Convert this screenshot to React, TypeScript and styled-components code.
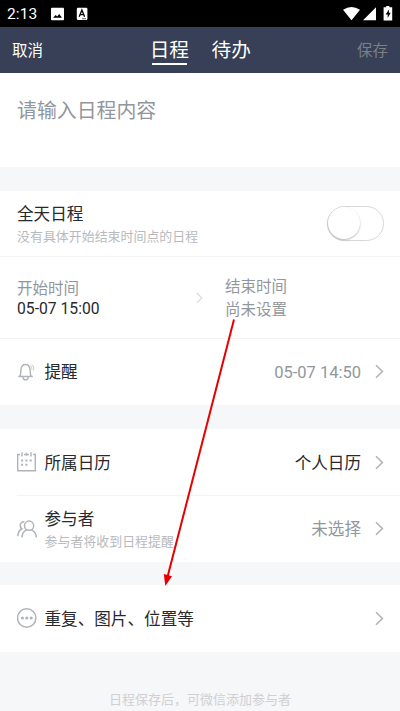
import React from "react";
import styled, { createGlobalStyle } from "styled-components";

const GlobalStyle = createGlobalStyle`
  * { box-sizing: border-box; }
  body { margin: 0; background: #f6f7f9; overflow: hidden; }
`;

const Screen = styled.main`
  position: relative;
  display: flex;
  flex-direction: column;
  width: 400px;
  height: 711px;
  overflow: hidden;
  background: #f6f7f9;
  color: #28292c;
  font-family: Roboto, "Noto Sans CJK SC", sans-serif;
`;

const StatusBar = styled.header`
  display: flex;
  align-items: center;
  height: 27px;
  padding: 0 6px 0 7px;
  background: #000;
  color: #fff;
`;

const Clock = styled.span`
  width: 44px;
  padding-top: 1px;
  font-size: 15.5px;
  line-height: 26px;
  letter-spacing: 0.1px;
`;

const StatusIcons = styled.svg<{ $end?: boolean }>`
  display: block;
  margin-left: ${(p) => (p.$end ? "auto" : "0")};
`;

const NavBar = styled.nav`
  display: grid;
  grid-template-columns: 1fr auto 1fr;
  height: 46px;
  padding: 0 12px;
  background: #374056;
  color: #fff;
`;

const NavAction = styled.button<{ $muted?: boolean }>`
  justify-self: ${(p) => (p.$muted ? "end" : "start")};
  border: 0;
  padding: 2px 0 0;
  background: none;
  color: ${(p) => (p.$muted ? "#7c7f87" : "#fff")};
  font: inherit;
  font-size: 15.5px;
  line-height: 44px;
`;

const Tabs = styled.div`
  display: flex;
  gap: 22.5px;
  padding: 11px 0 0 0.5px;
`;

const Tab = styled.span<{ $active?: boolean }>`
  display: flex;
  flex-direction: column;
  align-items: center;
  font-size: 19.7px;
  line-height: 25px;

  &::after {
    content: "";
    width: 35px;
    height: 2px;
    border-radius: 0.5px;
    background: ${(p) => (p.$active ? "#fff" : "transparent")};
  }
`;

const Composer = styled.section`
  height: 94px;
  padding: 24px 17px 0;
  background: #fff;
  color: #92979d;
  font-size: 19.9px;
  line-height: 30px;
`;

const Group = styled.section<{ $gap?: number }>`
  margin-top: ${(p) => p.$gap ?? 24}px;
  background: #fff;
`;

const Row = styled.div<{ $height: number; $divider?: "full" | "inset" }>`
  display: flex;
  align-items: center;
  height: ${(p) => p.$height}px;
  padding: 0 16px 0 17px;
  background: linear-gradient(#f4f4f5, #f4f4f5) no-repeat
    ${(p) => (p.$divider === "inset" ? "17px" : "0")} 100% / 100%
    ${(p) => (p.$divider ? "1px" : "0")};
`;

const IconSlot = styled.span`
  display: flex;
  width: 27.5px;
  padding-bottom: 1px;
`;

const Labels = styled.div<{ $single?: boolean }>`
  display: flex;
  flex-direction: column;
  flex: 1;
  padding-top: ${(p) => (p.$single ? "2px" : "1px")};
`;

const Title = styled.span`
  font-size: 16.6px;
  line-height: 24px;
`;

const Hint = styled.span`
  font-size: 12.95px;
  line-height: 20px;
  color: #b9babd;
`;

const Value = styled.span<{ $muted?: boolean; $numeric?: boolean }>`
  margin-right: 14px;
  padding-top: ${(p) => (p.$numeric ? "1px" : "2px")};
  font-size: ${(p) => (p.$numeric ? "16.5px" : "16.6px")};
  line-height: 24px;
  color: ${(p) => (p.$muted ? "#92979d" : "#28292c")};
`;

const TimeRow = styled(Row)`
  display: grid;
  grid-template-columns: 179px 29px 1fr;
`;

const TimeBlock = styled.div<{ $end?: boolean }>`
  display: flex;
  flex-direction: column;
  padding-top: ${(p) => (p.$end ? "1px" : "2px")};
`;

const TimeText = styled.span<{ $dark?: boolean; $height: number }>`
  font-size: ${(p) => (p.$dark ? "15.7px" : "15.5px")};
  line-height: ${(p) => p.$height}px;
  color: ${(p) => (p.$dark ? "#28292c" : "#92979d")};
`;

const Toggle = styled.span`
  width: 57px;
  height: 35px;
  margin: 0 0.5px 1px 0;
  border: 1px solid #d8d8d9;
  border-radius: 18px;
  background: #fff;

  &::after {
    content: "";
    display: block;
    width: 32px;
    height: 32px;
    border-radius: 50%;
    background: #fff;
    box-shadow: 0 1px 2px rgba(0, 0, 0, 0.28);
  }
`;

const FootNote = styled.footer`
  margin-top: 38px;
  text-align: center;
  font-size: 13px;
  line-height: 20px;
  color: #cfd0d3;
`;

const Pointer = styled.svg`
  position: absolute;
  left: 155px;
  top: 310px;
  pointer-events: none;
`;

const ChevronShape = styled.svg`
  display: block;
  margin-bottom: 1px;
`;

const Chevron = ({ color = "#b0b4b9", size = 1 }: { color?: string; size?: number }) => (
  <ChevronShape width={9 * size} height={15 * size} viewBox="0 0 9 15" fill="none" stroke={color} strokeWidth="1.6">
    <path d="M1 1.2 7.4 7.5 1 13.8" />
  </ChevronShape>
);

const BellIcon = () => (
  <svg width="20" height="20" viewBox="0 0 20 20" fill="none" stroke="#b0b3b7" strokeWidth="1.4">
    <path d="M1.200 14.500h14.600M2.900 14.300c1-1.700.7-3.400 1-6.600C4.300 4.500 6 2.500 8.500 2.500S12.700 4.500 13.100 7.700c.3 3.200 0 4.900 1 6.600M5.900 15.300c.3 1.700 1.300 2.500 2.700 2.500s2.400-.8 2.700-2.500" />
    <path d="M13.200 3.400c1.300 1.300 1.800 2.700 1.700 4.300M14.700 2.500c1.700 1.500 2.300 3.500 1.900 5.800" strokeWidth="1" stroke="#c4c6c9" />
  </svg>
);

const CalendarIcon = () => (
  <svg width="20" height="20" viewBox="0 0 20 20" fill="none" stroke="#b0b3b7" strokeWidth="1.400">
    <path d="M3 2.500H.7v16.300h17.600V2.500H16M7 2.500h4.900M5 .2v4.200M9.500.8v3M14 .2v4.200" />
    <path d="M4.100 8.500h2M8.400 8.500h2M12.700 8.500h2M4.100 12.800h2M8.400 12.800h2" strokeWidth="2" />
  </svg>
);

const PeopleIcon = () => (
  <svg width="20" height="18" viewBox="0 0 20 18" fill="none" stroke="#b0b4b9" strokeWidth="1.500">
    <circle cx="12.100" cy="5.700" r="4.600" />
    <path d="M5 17.400c.2-3.700 1.700-6.300 4.700-7.500M14.700 9.900c2.700 1.300 4.400 3.900 4.700 7.500M7.400 1.700C4.500 1.600 3.200 3.400 3.200 5.400c0 1.500.7 2.600 1.800 3.400C2.500 10 1 12.500.8 16.200" />
  </svg>
);

const MoreIcon = () => (
  <svg width="20" height="20" viewBox="0 0 20 20" fill="none" stroke="#b0b4b9" strokeWidth="1.500">
    <circle cx="9.700" cy="10" r="9.200" />
    <g fill="#b0b4b9" stroke="none">
      <circle cx="5.400" cy="10" r="1.600" />
      <circle cx="9.800" cy="10" r="1.600" />
      <circle cx="14.200" cy="10" r="1.600" />
    </g>
  </svg>
);

export default function App() {
  return (
    <Screen>
      <GlobalStyle />
      <StatusBar>
        <Clock>2:13</Clock>
        <StatusIcons width="37" height="14" viewBox="0 0 37 14" fill="#fff">
          <path fillRule="evenodd" d="M1.300.7h10.400c.8 0 1.300.5 1.300 1.300v9.900c0 .8-.5 1.300-1.300 1.300H1.300C.5 13.200 0 12.700 0 11.900V2C0 1.200.5.700 1.300.700ZM2 10.800h9L8.200 7 6.100 9.600 4.700 8 2 10.800Z" />
          <rect x="25.800" y=".8" width="10.600" height="12.200" rx="1.200" />
          <path d="m28.200 9.800 2.700-6.800 2.700 6.800M29.200 7.600h3.500M31.500 11.600h1m1 0h1" stroke="#000" strokeWidth="1.300" fill="none" />
        </StatusIcons>
        <StatusIcons $end width="51" height="16" viewBox="0 0 51 16" fill="#fff">
          <path d="M0 3.800Q8.500-1.800 17 3.800L8.500 14.200ZM20 14.200 33 1.200V14.200Z" />
          <path d="M43.200 1.200V0h3.200v1.200h2.800V14.600h-8.600V1.200Z" />
          <path d="M46.200 3.300 42.600 8.600h2.100v3.500L47.700 6.800h-1.900Z" fill="#000" />
        </StatusIcons>
      </StatusBar>
      <NavBar>
        <NavAction>取消</NavAction>
        <Tabs>
          <Tab $active>日程</Tab>
          <Tab>待办</Tab>
        </Tabs>
        <NavAction $muted>保存</NavAction>
      </NavBar>
      <Composer>请输入日程内容</Composer>
      <Group>
        <Row $height={66} $divider="full">
          <Labels>
            <Title>全天日程</Title>
            <Hint>没有具体开始结束时间点的日程</Hint>
          </Labels>
          <Toggle />
        </Row>
        <TimeRow $height={82} $divider="full">
          <TimeBlock>
            <TimeText $height={20}>开始时间</TimeText>
            <TimeText $height={20} $dark>05-07 15:00</TimeText>
          </TimeBlock>
          <Chevron color="#dcdee1" size={0.8} />
          <TimeBlock $end>
            <TimeText $height={23}>结束时间</TimeText>
            <TimeText $height={23}>尚未设置</TimeText>
          </TimeBlock>
        </TimeRow>
        <Row $height={66}>
          <IconSlot><BellIcon /></IconSlot>
          <Labels $single><Title>提醒</Title></Labels>
          <Value $muted $numeric>05-07 14:50</Value>
          <Chevron />
        </Row>
      </Group>
      <Group>
        <Row $height={67} $divider="inset">
          <IconSlot><CalendarIcon /></IconSlot>
          <Labels $single><Title>所属日历</Title></Labels>
          <Value>个人日历</Value>
          <Chevron />
        </Row>
        <Row $height={66}>
          <IconSlot><PeopleIcon /></IconSlot>
          <Labels>
            <Title>参与者</Title>
            <Hint>参与者将收到日程提醒</Hint>
          </Labels>
          <Value $muted>未选择</Value>
          <Chevron />
        </Row>
      </Group>
      <Group $gap={23}>
        <Row $height={67}>
          <IconSlot><MoreIcon /></IconSlot>
          <Labels $single><Title>重复、图片、位置等</Title></Labels>
          <Chevron />
        </Row>
      </Group>
      <FootNote>日程保存后，可微信添加参与者</FootNote>
      <Pointer width="85" height="280" viewBox="0 0 85 280">
        <path d="M79 9.500 12.500 267" stroke="#e60000" strokeWidth="2" />
        <path d="M10.300 276 8.800 264l8.200 2.200Z" fill="#e60000" />
      </Pointer>
    </Screen>
  );
}
